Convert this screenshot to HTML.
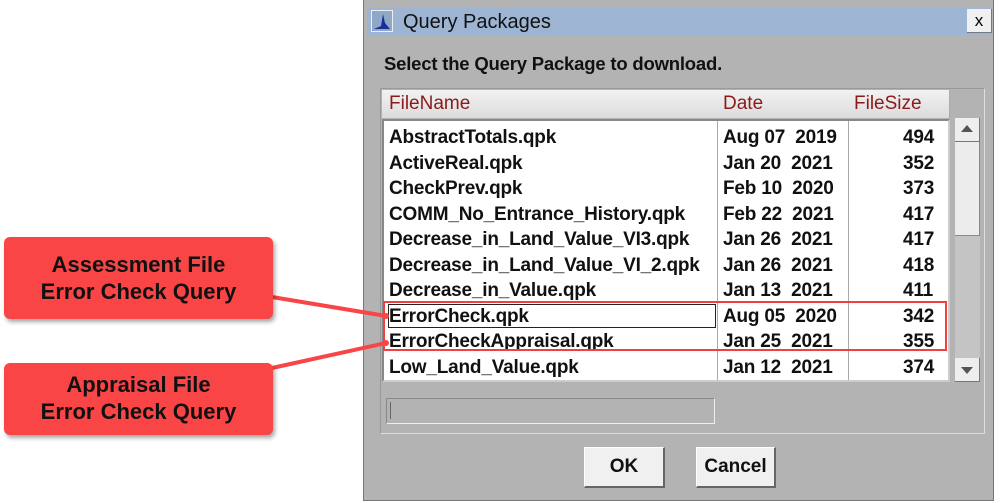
<!DOCTYPE html>
<html><head><style>
*{margin:0;padding:0;box-sizing:border-box}
body{width:1000px;height:503px;background:#fff;position:relative;overflow:hidden;font-family:"Liberation Sans",Arial,sans-serif}
.a{position:absolute;white-space:nowrap}
#dlg{left:363px;top:0;width:631px;height:501px;background:#b3b3b3;border:1px solid #777;border-top:none}
#title{left:367px;top:7px;width:625px;height:28px;background:#9db4d2}
.t{color:#111}
.b{font-weight:bold}
.row{position:absolute;left:0;height:25px;font-size:19px;font-weight:bold;color:#111;line-height:25px;white-space:nowrap;letter-spacing:-0.2px}
.btn{background:#f0f0f0;border:1px solid #fff;border-right:2px solid #666;border-bottom:2px solid #666;font-weight:bold;font-size:19px;text-align:center;line-height:38px;color:#111}
.call{background:#f94545;border-radius:6px;box-shadow:2px 3px 4px rgba(0,0,0,.35);color:#111;font-weight:bold;font-size:22px;text-align:center;line-height:27px}
</style></head><body>
<div id="dlg" class="a"></div>
<div id="title" class="a"></div>
<svg class="a" style="left:371px;top:10px" width="22" height="22"><rect x="0.5" y="0.5" width="21" height="21" fill="#8fa8c8" stroke="#eee"/><path d="M3 19 L10 16 L12 4 L14 13 L19 19 Z" fill="#1a2f9a"/></svg>
<div class="a t" style="left:403px;top:11px;font-size:20px">Query Packages</div>
<div class="a" style="left:967px;top:9px;width:25px;height:24px;background:#f0f0f0;border-right:1px solid #777;border-bottom:1px solid #777;text-align:center;font-size:17px;line-height:23px">x</div>
<div class="a t b" style="left:384px;top:53px;font-size:18.5px;letter-spacing:-0.2px">Select the Query Package to download.</div>
<div class="a" style="left:380px;top:88px;width:605px;height:346px;border:1px solid #999;border-right-color:#ddd;border-bottom-color:#ddd"></div>
<div class="a" style="left:382px;top:90px;width:568px;height:28px;background:linear-gradient(#f2f2f2,#dcdcdc);border-right:1px solid #aaa"></div>
<div class="a" style="left:389px;top:93px;color:#8b1a1a;font-size:19px">FileName</div>
<div class="a" style="left:723px;top:93px;color:#8b1a1a;font-size:19px">Date</div>
<div class="a" style="left:854px;top:93px;color:#8b1a1a;font-size:19px">FileSize</div>
<div class="a" style="left:382px;top:119px;width:568px;height:263px;background:#fff;border:2px solid #888;border-right-color:#ccc;border-bottom-color:#ccc"></div>
<div class="a" style="left:717px;top:121px;width:1px;height:259px;background:#aaa"></div>
<div class="a" style="left:848px;top:121px;width:1px;height:259px;background:#aaa"></div>
<div class="a" style="left:384px;top:125px;width:564px;height:255px">
<div class="row" style="top:0"><span class="a" style="left:5px">AbstractTotals.qpk</span><span class="a" style="left:339px">Aug 07&nbsp; 2019</span><span class="a" style="left:519px">494</span></div>
<div class="row" style="top:25.5px"><span class="a" style="left:5px">ActiveReal.qpk</span><span class="a" style="left:339px">Jan 20&nbsp; 2021</span><span class="a" style="left:519px">352</span></div>
<div class="row" style="top:51px"><span class="a" style="left:5px">CheckPrev.qpk</span><span class="a" style="left:339px">Feb 10&nbsp; 2020</span><span class="a" style="left:519px">373</span></div>
<div class="row" style="top:76.5px"><span class="a" style="left:5px">COMM_No_Entrance_History.qpk</span><span class="a" style="left:339px">Feb 22&nbsp; 2021</span><span class="a" style="left:519px">417</span></div>
<div class="row" style="top:102px"><span class="a" style="left:5px">Decrease_in_Land_Value_VI3.qpk</span><span class="a" style="left:339px">Jan 26&nbsp; 2021</span><span class="a" style="left:519px">417</span></div>
<div class="row" style="top:127.5px"><span class="a" style="left:5px">Decrease_in_Land_Value_VI_2.qpk</span><span class="a" style="left:339px">Jan 26&nbsp; 2021</span><span class="a" style="left:519px">418</span></div>
<div class="row" style="top:153px"><span class="a" style="left:5px">Decrease_in_Value.qpk</span><span class="a" style="left:339px">Jan 13&nbsp; 2021</span><span class="a" style="left:519px">411</span></div>
<div class="row" style="top:178.5px"><span class="a" style="left:5px">ErrorCheck.qpk</span><span class="a" style="left:339px">Aug 05&nbsp; 2020</span><span class="a" style="left:519px">342</span></div>
<div class="row" style="top:204px"><span class="a" style="left:5px">ErrorCheckAppraisal.qpk</span><span class="a" style="left:339px">Jan 25&nbsp; 2021</span><span class="a" style="left:519px">355</span></div>
<div class="row" style="top:229.5px"><span class="a" style="left:5px">Low_Land_Value.qpk</span><span class="a" style="left:339px">Jan 12&nbsp; 2021</span><span class="a" style="left:519px">374</span></div>
</div>
<div class="a" style="left:388px;top:304px;width:328px;height:24px;border:1px solid #222"></div>
<div class="a" style="left:383px;top:301px;width:564px;height:50px;border:2px solid #f04040"></div>
<div class="a" style="left:955px;top:118px;width:25px;height:264px;background:#c4c4c4"></div>
<div class="a" style="left:955px;top:118px;width:25px;height:24px;background:#eee;border-right:1px solid #777;border-bottom:1px solid #777"></div>
<div class="a" style="left:961px;top:125px;width:0;height:0;border:6px solid transparent;border-bottom:7px solid #555;border-top:none"></div>
<div class="a" style="left:955px;top:142px;width:25px;height:94px;background:#ececec;border-right:1px solid #888;border-bottom:1px solid #888"></div>
<div class="a" style="left:955px;top:358px;width:25px;height:24px;background:#eee;border-right:1px solid #777;border-bottom:1px solid #777"></div>
<div class="a" style="left:961px;top:367px;width:0;height:0;border:6px solid transparent;border-top:7px solid #555;border-bottom:none"></div>
<div class="a" style="left:386px;top:398px;width:329px;height:26px;border:1px solid #888;border-right-color:#eee;border-bottom-color:#eee;background:#b3b3b3"></div>
<div class="a" style="left:390px;top:402px;width:1px;height:17px;background:#666"></div>
<div class="a btn" style="left:584px;top:447px;width:81px;height:41px">OK</div>
<div class="a btn" style="left:696px;top:447px;width:80px;height:41px">Cancel</div>
<svg class="a" style="left:0;top:0" width="1000" height="503"><line x1="272" y1="297" x2="386" y2="316" stroke="#f94545" stroke-width="4"/><line x1="272" y1="368" x2="386" y2="343" stroke="#f94545" stroke-width="4"/><circle cx="386" cy="316" r="3" fill="#f94545"/><circle cx="386" cy="343" r="3" fill="#f94545"/></svg>
<div class="a call" style="left:4px;top:237px;width:269px;height:82px;padding-top:14px">Assessment File<br>Error Check Query</div>
<div class="a call" style="left:4px;top:363px;width:269px;height:72px;padding-top:8px">Appraisal File<br>Error Check Query</div>
</body></html>
